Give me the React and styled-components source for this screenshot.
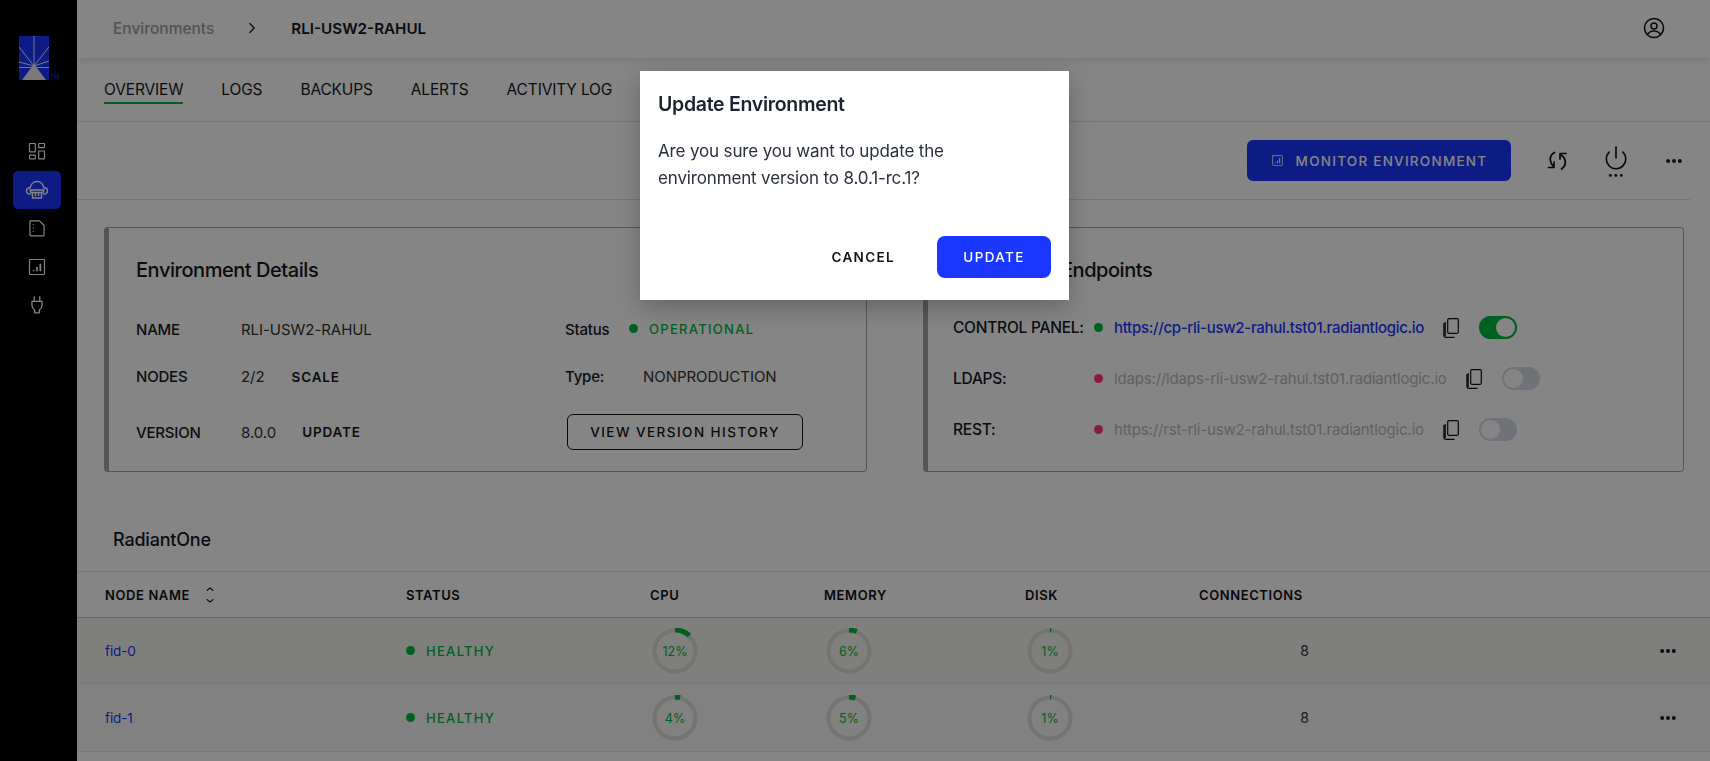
import styled, { createGlobalStyle } from "styled-components";
import { ChevronRight, Power, Ellipsis } from "lucide-react";

/* ----------------------- data ----------------------- */
const tabs = ["OVERVIEW", "LOGS", "BACKUPS", "ALERTS", "ACTIVITY LOG"];

const endpoints = [
  { label: "CONTROL PANEL:", url: "https://cp-rli-usw2-rahul.tst01.radiantlogic.io", on: true },
  { label: "LDAPS:", url: "ldaps://ldaps-rli-usw2-rahul.tst01.radiantlogic.io", on: false },
  { label: "REST:", url: "https://rst-rli-usw2-rahul.tst01.radiantlogic.io", on: false },
];

const nodes = [
  { name: "fid-0", cpu: 12, memory: 6, disk: 1, connections: 8, height: 66, bg: "#f3f3ef" },
  { name: "fid-1", cpu: 4, memory: 5, disk: 1, connections: 8, height: 68, bg: "#f7f7f7" },
];

const GREEN = "#00b83c";
const BLUE = "#1a37ff";

/* ----------------------- layout ----------------------- */
const Global = createGlobalStyle`
  html, body { margin: 0; height: 100%; background: #fff; overflow: hidden; }
  body { font-family: Inter, "Liberation Sans", sans-serif; color: #15181f; }
  * { box-sizing: border-box; }
`;

const Shell = styled.div`
  display: flex;
  height: 100vh;
  overflow: hidden;
`;

const Sidebar = styled.nav`
  width: 77px;
  flex: none;
  background: #000;
  display: flex;
  flex-direction: column;
  align-items: center;
  padding: 36px 3px 0 0;
`;

const LogoWrap = styled.div`
  display: flex;
  align-items: flex-end;
  gap: 1px;
  width: 46px;
  margin-left: 10px;
  margin-bottom: 52px;
`;

const Tm = styled.span`
  font-size: 6px;
  line-height: 7px;
  color: ${BLUE};
`;

const SideItem = styled.div`
  width: 48px;
  height: 38.5px;
  flex: none;
  border-radius: 5px;
  display: flex;
  align-items: center;
  justify-content: center;
  color: #fff;
  background: ${(p) => (p.$active ? BLUE : "transparent")};
`;

const Main = styled.main`
  flex: 1;
  min-width: 0;
  display: flex;
  flex-direction: column;
`;

const Header = styled.header`
  height: 58px;
  flex: none;
  display: flex;
  align-items: center;
  padding: 0 44px 2px 36px;
  box-shadow: 0 2px 8px rgba(0, 0, 0, 0.12);
`;

const Crumb = styled.span`
  font-size: 15.5px;
  font-weight: 500;
  color: #a0a0a0;
`;

const CrumbCurrent = styled.span`
  font-size: 15.2px;
  font-weight: 600;
  color: #15181f;
`;

const CrumbSep = styled.span`
  display: flex;
  margin: 0 30px 0 29px;
`;

const Avatar = styled.span`
  display: flex;
  margin-left: auto;
`;

const TabBar = styled.div`
  height: 64px;
  flex: none;
  display: flex;
  align-items: flex-start;
  gap: 38px;
  padding: 22px 0 0 27px;
  border-bottom: 1px solid #e0e0e0;
`;

const Tab = styled.div`
  font-size: 15.5px;
  line-height: 20px;
  letter-spacing: -0.15px;
  padding-bottom: 2px;
  border-bottom: 2px solid ${(p) => (p.$active ? GREEN : "transparent")};
`;

const Toolbar = styled.div`
  height: 78px;
  flex: none;
  display: flex;
  align-items: center;
  justify-content: flex-end;
  margin-right: 20px;
  padding-right: 4px;
  border-bottom: 1px solid #e0e0e0;
`;

const MonitorButton = styled.button`
  width: 264px;
  height: 41px;
  border: 0;
  border-radius: 6px;
  background: ${BLUE};
  color: #fff;
  font: 500 13.5px Inter, sans-serif;
  letter-spacing: 1.25px;
  display: flex;
  align-items: center;
  justify-content: center;
  gap: 12px;
`;

const ToolIcon = styled.span`
  width: ${(p) => p.$w}px;
  display: flex;
  flex-direction: column;
  align-items: ${(p) => (p.$end ? "flex-end" : "center")};
  padding-right: ${(p) => (p.$end ? 2 : 0)}px;
  color: #111;
`;

const PowerDots = styled.span`
  font-size: 9px;
  line-height: 3px;
  height: 3px;
  letter-spacing: 0.5px;
  margin-top: 2px;
`;

const Cards = styled.section`
  display: grid;
  grid-template-columns: 763px 761px;
  gap: 56px;
  padding: 27px 0 0 27px;
`;

const Card = styled.div`
  height: 245px;
  border: 1px solid #a6a6a6;
  border-left-width: 5px;
  border-radius: 4px;
  padding: 29px 0 0 ${(p) => p.$pad}px;
`;

const CardTitle = styled.h3`
  margin: 0 0 ${(p) => p.$mb}px;
  font-size: 20px;
  line-height: 26px;
  font-weight: 500;
  letter-spacing: -0.45px;
`;

const DetailRow = styled.div`
  height: ${(p) => p.$h}px;
  display: grid;
  grid-template-columns: 429px 1fr;
  align-items: center;
`;

const DetailPair = styled.div`
  display: flex;
  align-items: center;
`;

const Key = styled.span`
  width: ${(p) => p.$w}px;
  flex: none;
  font-size: 15px;
  letter-spacing: -0.2px;
  font-weight: 500;
`;

const Val = styled.span`
  font-size: 15px;
  letter-spacing: -0.05px;
  color: #333;
`;

const TextAction = styled.span`
  margin-left: ${(p) => p.$ml}px;
  font-size: 13.5px;
  font-weight: 600;
  letter-spacing: 0.85px;
`;

const Dot = styled.span`
  width: 9px;
  height: 9px;
  flex: none;
  border-radius: 50%;
  background: ${(p) => (p.$off ? "#ff3a70" : GREEN)};
`;

const StatusText = styled.span`
  font-size: 13px;
  font-weight: 500;
  letter-spacing: 1.3px;
  color: ${GREEN};
`;

const StatusWrap = styled.span`
  display: flex;
  align-items: center;
  gap: 11px;
  padding-bottom: ${(p) => (p.$lift ? 2 : 0)}px;
`;

const OutlineButton = styled.button`
  width: 236px;
  height: 36px;
  margin-left: 2px;
  background: transparent;
  border: 1px solid #111;
  border-radius: 6px;
  font: 500 13.5px Inter, sans-serif;
  letter-spacing: 1.45px;
  color: #111;
`;

const EndpointRow = styled.div`
  height: 51px;
  display: flex;
  align-items: center;
`;

const EndpointLabel = styled.span`
  width: 141px;
  flex: none;
  font-size: 15.5px;
  font-weight: 500;
  letter-spacing: -0.25px;
  white-space: nowrap;
`;

const EndpointUrl = styled.span`
  margin-left: 11px;
  font-size: 15px;
  letter-spacing: ${(p) => (p.$on ? "-0.3px" : "-0.17px")};
  color: ${(p) => (p.$on ? BLUE : "#b8b8b8")};
  font-weight: ${(p) => (p.$on ? 500 : 400)};
`;

const CopyWrap = styled.span`
  display: flex;
  margin: 0 20px 0 19px;
`;

const Toggle = styled.span`
  width: 38px;
  height: 23px;
  border-radius: 12px;
  padding: 2px;
  display: flex;
  justify-content: ${(p) => (p.$on ? "flex-end" : "flex-start")};
  background: ${(p) => (p.$on ? GREEN : "#d5dce6")};
`;

const Knob = styled.span`
  width: 19px;
  height: 19px;
  border-radius: 50%;
  background: #fff;
`;

const SectionTitle = styled.h4`
  margin: 0;
  height: 100px;
  padding: 55px 0 0 36px;
  font-size: 18px;
  line-height: 26px;
  font-weight: 500;
  letter-spacing: -0.2px;
  border-bottom: 1px solid #e0e0e0;
`;

const TableRow = styled.div`
  display: grid;
  grid-template-columns: 301px 244px 174px 201px 174px 110px 1fr;
  align-items: center;
  padding-left: 28px;
  height: ${(p) => p.$h}px;
  flex: none;
  border-bottom: 1px solid ${(p) => (p.$head ? "#c8c8c8" : "#e4e6ea")};
  background: ${(p) => p.$bg || "transparent"};
`;

const HeadCell = styled.div`
  display: flex;
  align-items: center;
  gap: 11px;
  font-size: 13px;
  font-weight: 600;
  letter-spacing: 0.6px;
  color: #111;
`;

const NodeLink = styled.span`
  font-size: 13.5px;
  letter-spacing: -0.1px;
  color: ${BLUE};
`;

const RingCell = styled.div`
  display: flex;
  padding-left: 2px;
`;

const Count = styled.div`
  font-size: 14px;
  color: #333;
  text-align: right;
`;

const RowMenu = styled.div`
  display: flex;
  justify-content: flex-end;
  padding-right: 32px;
  color: #111;
`;

/* ----------------------- modal ----------------------- */
const Overlay = styled.div`
  position: fixed;
  inset: 0;
  background: rgba(0, 0, 0, 0.48);
  display: flex;
  justify-content: center;
  align-items: flex-start;
  padding: 71px 1px 0 0;
`;

const Dialog = styled.div`
  width: 429px;
  height: 229px;
  background: #fff;
  padding: 19px 18px 0;
  box-shadow: 0 8px 24px rgba(0, 0, 0, 0.25);
  display: flex;
  flex-direction: column;
`;

const DialogTitle = styled.h2`
  margin: 0 0 20px;
  font-size: 19.5px;
  line-height: 28px;
  font-weight: 600;
  letter-spacing: -0.3px;
  color: #1c2230;
`;

const DialogBody = styled.p`
  margin: 0;
  font-size: 17px;
  line-height: 27px;
  letter-spacing: -0.15px;
  color: #2a3040;
`;

const DialogActions = styled.div`
  margin-top: auto;
  margin-bottom: 22px;
  display: flex;
  justify-content: flex-end;
  align-items: center;
  gap: 42px;
`;

const CancelButton = styled.button`
  border: 0;
  padding: 0;
  background: transparent;
  font: 600 13.5px Inter, sans-serif;
  letter-spacing: 1.35px;
  color: #111;
`;

const ConfirmButton = styled.button`
  width: 114px;
  height: 42px;
  border: 0;
  border-radius: 8px;
  background: ${BLUE};
  color: #fff;
  font: 500 13.5px Inter, sans-serif;
  letter-spacing: 1.35px;
`;

/* ----------------------- drawings ----------------------- */
const Logo = () => (
  <svg width="30" height="44" viewBox="0 0 30 44">
    <rect width="30" height="44" fill={BLUE} />
    <g stroke="#fff" strokeWidth="0.9" fill="none">
      <path d="M15 0V30M15 30L0 11M15 30L30 11M15 30L0 26M15 30L30 25M0 31.5H30" />
    </g>
    <path d="M15 28L27 44H3Z" fill="#e8e8e8" />
  </svg>
);

const Line = ({ size = 18, sw = 1.4, children }) => (
  <svg
    width={size}
    height={size}
    viewBox="0 0 24 24"
    fill="none"
    stroke="currentColor"
    strokeWidth={sw}
    strokeLinecap="round"
    strokeLinejoin="round"
  >
    {children}
  </svg>
);

const DashIcon = () => (
  <Line size={20}>
    <rect x="3" y="3" width="7" height="10" rx="0.5" />
    <rect x="14" y="3" width="7" height="5" rx="0.5" />
    <rect x="3" y="17" width="7" height="4.5" rx="0.5" />
    <rect x="14" y="12" width="7" height="9.5" rx="0.5" />
  </Line>
);

const CloudIcon = () => (
  <Line size={24}>
    <path d="M5.5 16C3 16 1.5 14.5 1.5 12.7C1.5 10.8 3.2 9.5 5.2 9.8C5.8 6 8.8 3.5 12 3.5C15.2 3.5 18.2 6 18.8 9.8C20.8 9.5 22.5 10.8 22.5 12.7C22.5 14.5 21 16 18.5 16" />
    <path d="M5 12H19L18 14.5H6Z" />
    <path d="M7.5 14.5V20H16.5V14.5M10.5 14.5V17.5M13.5 14.5V17.5" />
  </Line>
);

const FileIcon = () => (
  <Line size={20}>
    <path d="M4 3.5H15L20.5 9V20.5C20.5 21 20 21.5 19.5 21.5H4.5C4 21.5 3.5 21 3.5 20.5V4C3.5 3.7 3.7 3.5 4 3.5Z" />
    <path d="M7.5 8V8.1M7.5 12V12.1M7.5 16V16.1" />
  </Line>
);

const ChartIcon = ({ size = 20, sw = 1.4 }) => (
  <Line size={size} sw={sw}>
    <rect x="3" y="3" width="18" height="18" rx="1" />
    <path d="M8 17V15.5M12 17V12M16 17V8" strokeWidth="2" strokeLinecap="butt" />
  </Line>
);

const PlugIcon = () => (
  <Line size={22}>
    <path d="M9 3V8M15 3V8" />
    <path d="M6.5 8H17.5V12.5C17.5 15 16 16.5 14.5 17.5V20.5H9.5V17.5C8 16.5 6.5 15 6.5 12.5Z" />
  </Line>
);

const RotateIcon = () => (
  <Line size={24} sw={1.7}>
    <path d="M9.5 3.5C6.5 5.2 5 8 5.3 11C5.5 13.5 6.5 15.5 8.5 17.5" />
    <path d="M3.5 18.5H9V13" />
    <path d="M16.5 20C19.5 17.8 20.6 15 20.2 12C19.9 9.5 18.5 7.5 16.5 6.2" />
    <path d="M21 4.5H15V10" />
  </Line>
);

const CopyIcon = () => (
  <svg width="16" height="20" viewBox="0 0 16 20" fill="none" stroke="#111" strokeWidth="1.2">
    <rect x="4.7" y="0.7" width="10.6" height="14.6" rx="1.2" />
    <path d="M2.2 4V17C2.2 18 0.9 18.4 0.9 17V5M0.9 17.5C0.9 18.6 1.6 19.3 2.6 19.3H11.5" />
  </svg>
);

const UserIcon = () => (
  <Line size={24} sw={1.6}>
    <circle cx="12" cy="12" r="9.5" />
    <circle cx="12" cy="10" r="3" />
    <path d="M5.5 18.5C7 16 9 15 12 15C15 15 17 16 18.5 18.5" />
  </Line>
);

const SortIcon = () => (
  <Line size={18} sw={1.5}>
    <path d="M8 6L12 2.5L16 6M8 18L12 21.5L16 18" />
  </Line>
);

const Ring = ({ value }) => (
  <svg width="46" height="46" viewBox="0 0 46 46">
    <circle cx="23" cy="23" r="20.5" fill="none" stroke="#dcdcd8" strokeWidth="4" />
    <circle
      cx="23"
      cy="23"
      r="21"
      fill="none"
      stroke={GREEN}
      strokeWidth="5"
      pathLength="100"
      strokeDasharray={`${value} 100`}
      transform="rotate(-90 23 23)"
    />
    <text x="23" y="27.5" textAnchor="middle" fontSize="12.5" fill={GREEN} fontFamily="Inter, sans-serif">
      {value}%
    </text>
  </svg>
);

/* ----------------------- component ----------------------- */
export default function App() {
  return (
    <>
      <Global />
      <Shell>
        <Sidebar>
          <LogoWrap>
            <Logo />
            <Tm>TM</Tm>
          </LogoWrap>
          <SideItem>
            <DashIcon />
          </SideItem>
          <SideItem $active>
            <CloudIcon />
          </SideItem>
          <SideItem>
            <FileIcon />
          </SideItem>
          <SideItem>
            <ChartIcon />
          </SideItem>
          <SideItem>
            <PlugIcon />
          </SideItem>
        </Sidebar>

        <Main>
          <Header>
            <Crumb>Environments</Crumb>
            <CrumbSep>
              <ChevronRight size={18} strokeWidth={1.6} color="#111" />
            </CrumbSep>
            <CrumbCurrent>RLI-USW2-RAHUL</CrumbCurrent>
            <Avatar>
              <UserIcon />
            </Avatar>
          </Header>

          <TabBar>
            {tabs.map((t, i) => (
              <Tab key={t} $active={i === 0}>
                {t}
              </Tab>
            ))}
          </TabBar>

          <Toolbar>
            <MonitorButton>
              <ChartIcon size={13} sw={1.5} />
              MONITOR ENVIRONMENT
            </MonitorButton>
            <ToolIcon $w={91}>
              <RotateIcon />
            </ToolIcon>
            <ToolIcon $w={28}>
              <Power size={26} strokeWidth={1.5} />
              <PowerDots>•••</PowerDots>
            </ToolIcon>
            <ToolIcon $w={56} $end>
              <Ellipsis size={20} strokeWidth={2.6} />
            </ToolIcon>
          </Toolbar>

          <Cards>
            <Card $pad={27}>
              <CardTitle $mb={23}>Environment Details</CardTitle>
              <DetailRow $h={47}>
                <DetailPair>
                  <Key $w={105}>NAME</Key>
                  <Val>RLI-USW2-RAHUL</Val>
                </DetailPair>
                <DetailPair>
                  <Key $w={64}>Status</Key>
                  <StatusWrap $lift>
                    <Dot />
                    <StatusText>OPERATIONAL</StatusText>
                  </StatusWrap>
                </DetailPair>
              </DetailRow>
              <DetailRow $h={47}>
                <DetailPair>
                  <Key $w={105}>NODES</Key>
                  <Val>2/2</Val>
                  <TextAction $ml={27}>SCALE</TextAction>
                </DetailPair>
                <DetailPair>
                  <Key $w={78}>Type:</Key>
                  <Val>NONPRODUCTION</Val>
                </DetailPair>
              </DetailRow>
              <DetailRow $h={64}>
                <DetailPair>
                  <Key $w={105}>VERSION</Key>
                  <Val>8.0.0</Val>
                  <TextAction $ml={26}>UPDATE</TextAction>
                </DetailPair>
                <DetailPair>
                  <OutlineButton>VIEW VERSION HISTORY</OutlineButton>
                </DetailPair>
              </DetailRow>
            </Card>

            <Card $pad={25}>
              <CardTitle $mb={19}>Application Endpoints</CardTitle>
              {endpoints.map((e) => (
                <EndpointRow key={e.label}>
                  <EndpointLabel>{e.label}</EndpointLabel>
                  <Dot $off={!e.on} />
                  <EndpointUrl $on={e.on}>{e.url}</EndpointUrl>
                  <CopyWrap>
                    <CopyIcon />
                  </CopyWrap>
                  <Toggle $on={e.on}>
                    <Knob />
                  </Toggle>
                </EndpointRow>
              ))}
            </Card>
          </Cards>

          <SectionTitle>RadiantOne</SectionTitle>

          <TableRow $head $h={46}>
            <HeadCell>
              NODE NAME
              <SortIcon />
            </HeadCell>
            <HeadCell>STATUS</HeadCell>
            <HeadCell>CPU</HeadCell>
            <HeadCell>MEMORY</HeadCell>
            <HeadCell>DISK</HeadCell>
            <HeadCell>CONNECTIONS</HeadCell>
          </TableRow>

          {nodes.map((n) => (
            <TableRow key={n.name} $h={n.height} $bg={n.bg}>
              <NodeLink>{n.name}</NodeLink>
              <StatusWrap>
                <Dot />
                <StatusText>HEALTHY</StatusText>
              </StatusWrap>
              <RingCell>
                <Ring value={n.cpu} />
              </RingCell>
              <RingCell>
                <Ring value={n.memory} />
              </RingCell>
              <RingCell>
                <Ring value={n.disk} />
              </RingCell>
              <Count>{n.connections}</Count>
              <RowMenu>
                <Ellipsis size={20} strokeWidth={2.6} />
              </RowMenu>
            </TableRow>
          ))}
        </Main>
      </Shell>

      <Overlay>
        <Dialog>
          <DialogTitle>Update Environment</DialogTitle>
          <DialogBody>
            Are you sure you want to update the
            <br />
            environment version to 8.0.1-rc.1?
          </DialogBody>
          <DialogActions>
            <CancelButton>CANCEL</CancelButton>
            <ConfirmButton>UPDATE</ConfirmButton>
          </DialogActions>
        </Dialog>
      </Overlay>
    </>
  );
}
